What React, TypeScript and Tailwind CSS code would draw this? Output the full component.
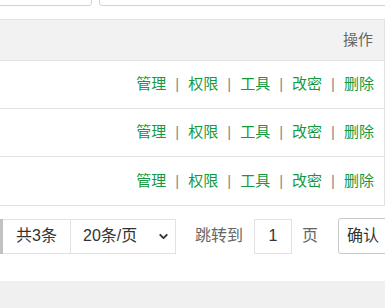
import { ChevronDown } from 'lucide-react';

const actions = ['管理', '权限', '工具', '改密', '删除'];
const rows = [1, 2, 3];

const font = { fontFamily: '"Liberation Sans", "Noto Sans CJK SC", sans-serif' };

function ActionLinks() {
  return (
    <div className="flex items-center justify-end pr-[10px] text-[15px] text-[#14993f]">
      {actions.map((a, i) => (
        <span key={a} className="flex items-center">
          {i > 0 && <span className="mx-[9px] text-[#8a8a8a]">|</span>}
          <a className="cursor-pointer">{a}</a>
        </span>
      ))}
    </div>
  );
}

export default function App() {
  return (
    <div className="w-[385px] h-[308px] overflow-hidden bg-white flex flex-col" style={font}>
      {/* search inputs, cut off at the top */}
      <div className="h-[6px] shrink-0 overflow-hidden flex items-end gap-[7px]">
        <div className="-ml-[10px] w-[102px] h-[36px] shrink-0 border border-[#d2d2d2] rounded-[3px]" />
        <div className="flex-1 -mr-[10px] h-[36px] border border-[#d2d2d2] rounded-[3px]" />
      </div>

      {/* table */}
      <div className="mt-[13px] shrink-0 border-y border-r border-[#e2e2e2]">
        <div className="h-[41px] bg-[#f2f2f2] border-b border-[#e2e2e2] flex items-center justify-end pr-[11px] text-[15px] text-[#666]">
          操作
        </div>
        {rows.map((r) => (
          <div
            key={r}
            className="h-[48px] flex items-center justify-end border-b last:border-b-0 border-[#e2e2e2]"
          >
            <ActionLinks />
          </div>
        ))}
      </div>

      {/* pagination */}
      <div className="mt-[12px] shrink-0 flex items-center h-[36px] text-[16px] text-[#333] whitespace-nowrap">
        <div className="shrink-0 w-[3px] h-[35px] bg-[#c2c2c2]" />
        <div className="shrink-0 w-[68px] h-[35px] border-y border-r border-[#e2e2e2] flex items-center justify-center">
          共3条
        </div>
        <div className="shrink-0 w-[105px] h-[35px] border-y border-r border-[#e2e2e2] flex items-center pl-[12px] pr-[5px] justify-between">
          <span>20条/页</span>
          <ChevronDown className="w-[13px] h-[13px] text-[#333]" strokeWidth={3.5} />
        </div>
        <span className="shrink-0 ml-[19px] text-[#666]">跳转到</span>
        <div className="shrink-0 ml-[11px] w-[38px] h-[35px] border border-[#e2e2e2] flex items-center justify-center">
          1
        </div>
        <span className="shrink-0 ml-[10px] text-[#666]">页</span>
        <div className="shrink-0 ml-[20px] w-[60px] h-[36px] border border-[#c9c9c9] rounded-[3px] flex items-center pl-[8px] text-[#333]">
          确认
        </div>
      </div>

      <div className="mt-[27px] flex-1 bg-[#f0f0f0]" />
    </div>
  );
}
